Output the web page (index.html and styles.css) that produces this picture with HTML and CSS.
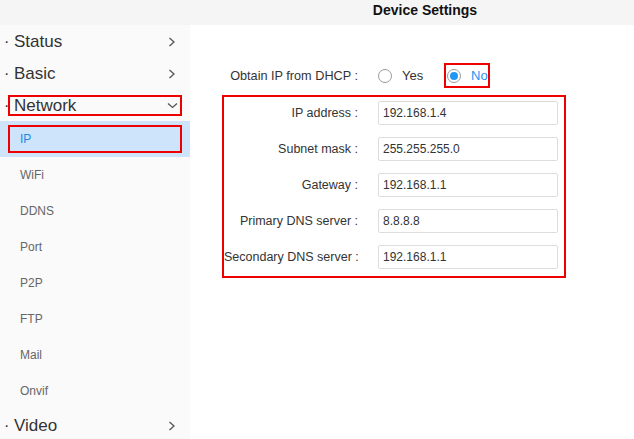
FILE: index.html
```html
<!DOCTYPE html>
<html lang="en">
<head>
    <meta charset="UTF-8">
    <meta name="viewport" content="width=device-width, initial-scale=1.0">
    <title>Device Settings</title>
    <link rel="stylesheet" href="styles.css">
</head>
<body>
    <div class="topbar">Device Settings</div>

    <div class="layout">
        <ul class="menu">
            <li class="menu-head">
                <span class="dot">·</span>
                <span class="menu-title">Status
                    <svg class="chev" width="8" height="10" viewBox="0 0 8 10"><polyline points="1.5,1 6,5 1.5,9"/></svg>
                </span>
            </li>
            <li class="menu-head">
                <span class="dot">·</span>
                <span class="menu-title">Basic
                    <svg class="chev" width="8" height="10" viewBox="0 0 8 10"><polyline points="1.5,1 6,5 1.5,9"/></svg>
                </span>
            </li>
            <li class="menu-head">
                <span class="dot">·</span>
                <span class="menu-title mark">Network
                    <svg class="chev down" width="11" height="7" viewBox="0 0 11 7"><polyline points="1,1.5 5.5,5.5 10,1.5"/></svg>
                </span>
            </li>
            <li class="sub active"><span class="sub-title mark">IP</span></li>
            <li class="sub"><span class="sub-title">WiFi</span></li>
            <li class="sub"><span class="sub-title">DDNS</span></li>
            <li class="sub"><span class="sub-title">Port</span></li>
            <li class="sub"><span class="sub-title">P2P</span></li>
            <li class="sub"><span class="sub-title">FTP</span></li>
            <li class="sub"><span class="sub-title">Mail</span></li>
            <li class="sub"><span class="sub-title">Onvif</span></li>
            <li class="menu-head">
                <span class="dot">·</span>
                <span class="menu-title">Video
                    <svg class="chev" width="8" height="10" viewBox="0 0 8 10"><polyline points="1.5,1 6,5 1.5,9"/></svg>
                </span>
            </li>
        </ul>

        <div class="content">
            <div class="dhcp-row">
                <label>Obtain IP from DHCP :</label>
                <div class="options">
                    <span class="opt yes"><span class="radio"></span>Yes</span>
                    <span class="opt checked mark"><span class="radio"></span>No</span>
                </div>
            </div>

            <div class="net-box">
                <label for="ip">IP address :</label>
                <input type="text" id="ip" value="192.168.1.4">

                <label for="mask">Subnet mask :</label>
                <input type="text" id="mask" value="255.255.255.0">

                <label for="gateway">Gateway :</label>
                <input type="text" id="gateway" value="192.168.1.1">

                <label for="dns1">Primary DNS server :</label>
                <input type="text" id="dns1" value="8.8.8.8">

                <label for="dns2">Secondary DNS server :</label>
                <input type="text" id="dns2" value="192.168.1.1">
            </div>
        </div>
    </div>
</body>
</html>
```

FILE: styles.css
```css
body {
    margin: 0;
    font-family: "Liberation Sans", Arial, sans-serif;
    color: #333;
    background-color: #fff;
}

.topbar {
    height: 25px;
    line-height: 21px;
    padding-left: 216px;
    text-align: center;
    font-size: 14px;
    font-weight: bold;
    color: #111;
    background-color: #f5f5f5;
}

.layout {
    display: flex;
}

/* Side menu */
.menu {
    width: 190px;
    margin: 0;
    padding: 0;
    list-style: none;
    background-color: #fafafa;
    min-height: 414px;
}

.menu-head {
    display: flex;
    align-items: center;
    height: 32px;
    padding-left: 4px;
    padding-right: 8px;
    padding-top: 1px;
    box-sizing: border-box;
    font-size: 17px;
    color: #333;
}

.dot {
    width: 4px;
    overflow: visible;
    font-size: 16px;
}

.menu-title {
    flex: 1;
    display: flex;
    align-items: center;
    justify-content: space-between;
    height: 21px;
    padding: 0 4px;
    border: 2px solid transparent;
    box-sizing: border-box;
}

.chev {
    fill: none;
    stroke: #555;
    stroke-width: 1.3;
}

.chev.down {
    margin-right: -2px;
}

.sub {
    display: flex;
    align-items: center;
    height: 36px;
    padding: 0 8px;
    font-size: 12px;
    color: #666;
}

.sub-title {
    flex: 1;
    display: flex;
    align-items: center;
    height: 28px;
    padding-left: 10px;
    border: 2px solid transparent;
    box-sizing: border-box;
}

.sub.active {
    background-color: #cde4fb;
    color: #1e88e5;
}

.mark {
    border-color: #e00;
}

/* Main content */
.content {
    flex: 1;
    padding: 38px 0 0 32px;
}

.dhcp-row {
    display: grid;
    grid-template-columns: 136px auto;
    column-gap: 20px;
    align-items: center;
    height: 25px;
    margin-bottom: 7px;
    font-size: 12.7px;
}

.dhcp-row label {
    text-align: right;
}

.options {
    display: flex;
    align-items: center;
}

.opt {
    display: flex;
    align-items: center;
    gap: 10px;
    font-size: 13px;
}

.opt.yes {
    width: 66px;
}

.opt.mark {
    height: 25px;
    padding-left: 1px;
    border: 2px solid #e00;
    box-sizing: border-box;
}

.radio {
    width: 14px;
    height: 14px;
    border: 1px solid #9a9a9a;
    border-radius: 50%;
    box-sizing: border-box;
    display: flex;
    align-items: center;
    justify-content: center;
}

.opt.checked {
    color: #2196f3;
}

.opt.checked .radio::after {
    content: "";
    width: 8px;
    height: 8px;
    border-radius: 50%;
    background-color: #2196f3;
}

.net-box {
    display: grid;
    grid-template-columns: 134px 180px;
    column-gap: 20px;
    row-gap: 12px;
    align-items: center;
    width: 344px;
    padding: 4px 6px 7px 0;
    border: 2px solid #e00;
    box-sizing: border-box;
    font-size: 12.5px;
}

.net-box label {
    text-align: right;
    white-space: nowrap;
}

.net-box input {
    width: 180px;
    height: 24px;
    padding: 0 4px;
    border: 1px solid #ddd;
    border-radius: 2px;
    box-sizing: border-box;
    font-family: inherit;
    font-size: 12px;
    color: #333;
}
```
